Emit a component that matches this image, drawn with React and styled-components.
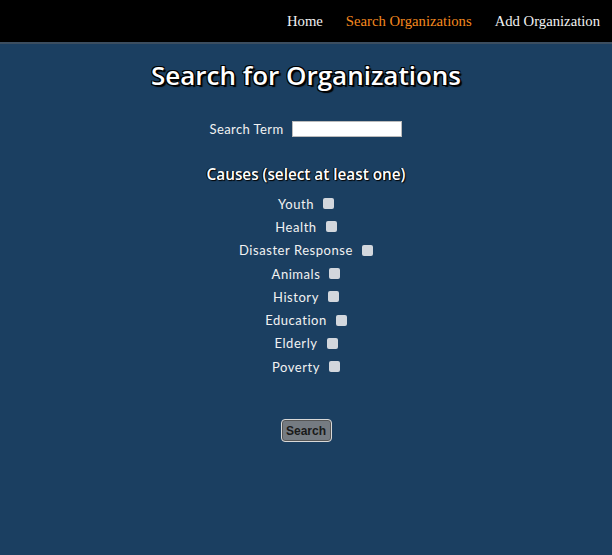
import React from 'react';
import styled, { createGlobalStyle } from 'styled-components';

const GlobalStyle = createGlobalStyle`
  html, body {
    margin: 0;
    padding: 0;
    min-height: 100%;
    background: #1b3f61;
  }
  #root {
    min-height: 100vh;
  }
`;

const causes = ['Youth', 'Health', 'Disaster Response', 'Animals', 'History', 'Education', 'Elderly', 'Poverty'];

const NavBar = styled.nav`
  height: 42px;
  background: #000;
  border-bottom: 2px solid #3c4e60;
  display: flex;
  justify-content: flex-end;
  align-items: center;
  gap: 23px;
  padding-right: 12px;
`;

const NavLink = styled.a`
  font-family: 'Liberation Serif', serif;
  font-size: 14.7px;
  color: ${p => (p.$active ? '#f5891f' : '#f2f2f2')};
  text-decoration: none;
  cursor: pointer;
`;

const Main = styled.main`
  display: flex;
  flex-direction: column;
  align-items: center;
`;

const Title = styled.h1`
  margin: 13px 0 0;
  font-family: 'Open Sans', 'Noto Sans', sans-serif;
  font-weight: 600;
  font-size: 26px;
  color: #fff;
  text-shadow: -1px -1px 0 #000, 1px -1px 0 #000, -1px 1px 0 #000, 2px 2px 1px #000;
`;

const TermRow = styled.label`
  margin-top: 28px;
  display: flex;
  align-items: center;
  gap: 9px;
  font-family: 'Lato', sans-serif;
  font-size: 13px;
  letter-spacing: 0.4px;
  color: #f2f2f2;
`;

const TermInput = styled.input`
  width: 110px;
  height: 16px;
  box-sizing: border-box;
  border: 1px solid #bbb;
  background: #fff;
  padding: 0 2px;
`;

const Subtitle = styled.h3`
  margin: 27px 0 8px;
  font-family: 'Open Sans', 'Noto Sans', sans-serif;
  font-weight: 600;
  font-size: 15.3px;
  color: #fff;
  text-shadow: 1px 1px 1px #000, -1px 0 0 #000;
`;

const CauseList = styled.div`
  display: flex;
  flex-direction: column;
  align-items: center;
`;

const CauseRow = styled.label`
  height: 23.3px;
  display: flex;
  align-items: center;
  gap: 9px;
  font-family: 'Lato', sans-serif;
  font-size: 13px;
  letter-spacing: 0.55px;
  color: #f2f2f2;
`;

const Box = styled.span`
  width: 11px;
  height: 11px;
  border-radius: 2px;
  background: #d3d7dd;
`;

const SearchButton = styled.button`
  margin-top: 41px;
  width: 51px;
  height: 23px;
  background: #757b82;
  border: 1px solid #d8d8d8;
  border-radius: 4px;
  font-family: 'Liberation Sans', sans-serif;
  font-weight: bold;
  font-size: 12px;
  color: #1a1a1a;
  padding: 0;
  box-shadow: inset 0 0 0 1px #555;
`;

export default function App() {
  return (
    <>
      <GlobalStyle />
      <NavBar>
        <NavLink>Home</NavLink>
        <NavLink $active>Search Organizations</NavLink>
        <NavLink>Add Organization</NavLink>
      </NavBar>
      <Main>
        <Title>Search for Organizations</Title>
        <TermRow>
          Search Term
          <TermInput type="text" />
        </TermRow>
        <Subtitle>Causes (select at least one)</Subtitle>
        <CauseList>
          {causes.map(c => (
            <CauseRow key={c}>
              {c}
              <Box />
            </CauseRow>
          ))}
        </CauseList>
        <SearchButton>Search</SearchButton>
      </Main>
    </>
  );
}
